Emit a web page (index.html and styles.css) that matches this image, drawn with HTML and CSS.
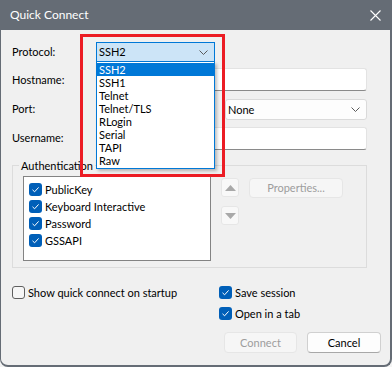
FILE: index.html
```html
<!DOCTYPE html>
<html>
<head>
<meta charset="utf-8">
<link rel="stylesheet" href="styles.css">
</head>
<body>
<div class="window">
  <div class="titlebar">
    <span class="title">Quick Connect</span>
    <svg class="close" width="11" height="11" viewBox="0 0 11 11"><path d="M0.5 0.5 L10.5 10.5 M10.5 0.5 L0.5 10.5" stroke="#fff" stroke-width="1.1" fill="none"/></svg>
  </div>
  <div class="form">
    <label class="lbl">Protocol:</label>
    <div class="combo combo-active proto"><span>SSH2</span><svg class="chev" width="9" height="5" viewBox="0 0 9 5"><path d="M0.5 0.5 L4.5 4.5 L8.5 0.5" stroke="#5a5a5a" fill="none"/></svg></div>
    <label class="lbl">Hostname:</label>
    <div class="input"></div>
    <label class="lbl">Port:</label>
    <div class="port-row">
      <div class="input port-in"></div>
      <div class="combo fw"><span>None</span><svg class="chev" width="9" height="5" viewBox="0 0 9 5"><path d="M0.5 0.5 L4.5 4.5 L8.5 0.5" stroke="#5a5a5a" fill="none"/></svg></div>
    </div>
    <label class="lbl">Username:</label>
    <div class="input"></div>
  </div>
  <div class="group">
    <span class="legend">Authentication</span>
    <div class="group-body">
      <div class="listbox">
        <div class="item"><span class="cb on"><svg width="13" height="13" viewBox="0 0 13 13"><path d="M3.5 6.8 L5.6 8.8 L9.6 4.4" stroke="#fff" stroke-width="1" fill="none"/></svg></span>PublicKey</div>
        <div class="item"><span class="cb on"><svg width="13" height="13" viewBox="0 0 13 13"><path d="M3.5 6.8 L5.6 8.8 L9.6 4.4" stroke="#fff" stroke-width="1" fill="none"/></svg></span>Keyboard Interactive</div>
        <div class="item"><span class="cb on"><svg width="13" height="13" viewBox="0 0 13 13"><path d="M3.5 6.8 L5.6 8.8 L9.6 4.4" stroke="#fff" stroke-width="1" fill="none"/></svg></span>Password</div>
        <div class="item"><span class="cb on"><svg width="13" height="13" viewBox="0 0 13 13"><path d="M3.5 6.8 L5.6 8.8 L9.6 4.4" stroke="#fff" stroke-width="1" fill="none"/></svg></span>GSSAPI</div>
      </div>
      <div class="arrows">
        <div class="abtn"><svg width="11" height="6" viewBox="0 0 11 6"><path d="M0 6 L5.5 0 L11 6 Z" fill="#a9a9a9"/></svg></div>
        <div class="abtn"><svg width="11" height="6" viewBox="0 0 11 6"><path d="M0 0 L5.5 6 L11 0 Z" fill="#a9a9a9"/></svg></div>
      </div>
      <div class="btn disabled props">Properties...</div>
    </div>
  </div>
  <div class="bottom">
    <div class="bleft">
      <div class="check"><span class="cb off"></span>Show quick connect on startup</div>
    </div>
    <div class="bright">
      <div class="check"><span class="cb on"><svg width="13" height="13" viewBox="0 0 13 13"><path d="M3.5 6.8 L5.6 8.8 L9.6 4.4" stroke="#fff" stroke-width="1" fill="none"/></svg></span>Save session</div>
      <div class="check"><span class="cb on"><svg width="13" height="13" viewBox="0 0 13 13"><path d="M3.5 6.8 L5.6 8.8 L9.6 4.4" stroke="#fff" stroke-width="1" fill="none"/></svg></span>Open in a tab</div>
      <div class="buttons">
        <div class="btn disabled connect">Connect</div>
        <div class="btn cancel">Cancel</div>
      </div>
    </div>
  </div>

  <div class="dropdown">
    <div class="opt sel">SSH2</div>
    <div class="opt">SSH1</div>
    <div class="opt">Telnet</div>
    <div class="opt">Telnet/TLS</div>
    <div class="opt">RLogin</div>
    <div class="opt">Serial</div>
    <div class="opt">TAPI</div>
    <div class="opt">Raw</div>
  </div>
  <div class="highlight"></div>
</div>
</body>
</html>
```

FILE: styles.css
```css
* { box-sizing: border-box; }
html, body { margin: 0; padding: 0; background: #f3f3f3; }
body { font-family: Lato, "Noto Sans", sans-serif; font-size: 11px; color: #000; }

.window {
  position: relative;
  width: 392px;
  height: 367px;
  background: #f0f0f0;
  border: 1px solid #656c75;
  border-top: 0;
  border-right-width: 2px;
  border-bottom-width: 2px;
  border-radius: 0 0 8px 8px;
  overflow: hidden;
}

.titlebar {
  height: 30px;
  background: #656c75;
  display: flex;
  align-items: center;
  justify-content: space-between;
  padding: 0 10px 0 9px;
  color: #fff;
}
.title { font-size: 12px; line-height: 16px; }
.close { display: block; margin-right: -1px; }

.form {
  display: grid;
  grid-template-columns: 84px 271px;
  row-gap: 6px;
  padding: 12px 0 0 11px;
  align-items: center;
}
.lbl { line-height: 16px; }

.input {
  height: 23px;
  background: #fff;
  border: 1px solid #e3e3e3;
  border-bottom: 1px solid #8a8a8a;
  border-radius: 3px;
}
.combo {
  height: 21px;
  background: #fdfdfd;
  border: 1px solid #dadada;
  border-radius: 3px;
  display: flex;
  align-items: center;
  justify-content: space-between;
  padding: 0 6px 0 2px;
  line-height: 16px;
}
.combo-active {
  background: #cce4f7;
  border-color: #0078d7;
  border-radius: 0;
  height: 20px;
}
.proto { width: 119px; }
.chev { display: block; }

.port-row { display: flex; gap: 10px; margin-top: 2px; }
.port-in { width: 119px; height: 21px; }
.fw { width: 142px; }
.form .input:last-child { margin-top: 1px; }

.group {
  position: relative;
  margin: 15px 23px 0 11px;
  height: 103px;
  border: 1px solid #dcdcdc;
  padding: 0 9px 0 10px;
}
.legend {
  display: block;
  width: max-content;
  margin: -8px 0 0 -4px;
  padding: 0 2px;
  background: #f0f0f0;
  line-height: 16px;
}
.group-body { display: flex; align-items: flex-start; margin-top: 2px; }
.listbox {
  width: 188px;
  height: 85px;
  background: #fff;
  border: 1px solid #838383;
  padding: 4px 0 0 5px;
}
.item { display: flex; align-items: center; height: 17px; line-height: 16px; }
.item .cb { margin-right: 3px; }

.cb {
  display: inline-block;
  width: 13px;
  height: 13px;
  border-radius: 3px;
  flex: none;
}
.cb svg { display: block; }
.cb.on { background: #005fb8; }
.cb.off { border: 1px solid #5f5f5f; background: #f6f6f6; }

.arrows { display: flex; flex-direction: column; gap: 9px; margin: 2px 0 0 10px; }
.abtn {
  width: 18px;
  height: 19px;
  background: #f8f8f8;
  border: 1px solid #e6e6e6;
  border-radius: 3px;
  display: flex;
  align-items: center;
  justify-content: center;
}
.btn {
  height: 21px;
  border-radius: 4px;
  display: flex;
  align-items: center;
  justify-content: center;
  line-height: 16px;
}
.btn.disabled { background: #f6f6f6; border: 1px solid #e6e6e6; color: #9d9d9d; }
.props { width: 94px; height: 20px; margin: 2px 0 0 10px; }

.bottom { display: flex; padding: 17px 0 0 11px; }
.bleft { width: 207px; }
.check { display: flex; align-items: center; height: 15px; line-height: 16px; }
.check .cb { margin-right: 3px; }
.bright .check + .check { margin-top: 6px; }
.bright { display: flex; flex-direction: column; }
.buttons { display: flex; gap: 10px; margin: 11px 0 0 5px; }
.connect { width: 73px; }
.cancel { width: 74px; background: #fdfdfd; border: 1px solid #d0d0d0; border-bottom-color: #a8a8a8; }

.dropdown {
  position: absolute;
  left: 95px;
  top: 62px;
  width: 119px;
  height: 107px;
  background: #fff;
  border: 1px solid #0078d7;
  border-top: 0;
  box-shadow: 2px 2px 3px rgba(0,0,0,0.25);
  padding-top: 1px;
}
.opt { height: 13px; line-height: 13px; padding-left: 2px; }
.opt.sel { background: #0078d7; color: #fff; }

.highlight {
  position: absolute;
  left: 79px;
  top: 34px;
  width: 145px;
  height: 143px;
  border: 3px solid #ec1c24;
}
```
